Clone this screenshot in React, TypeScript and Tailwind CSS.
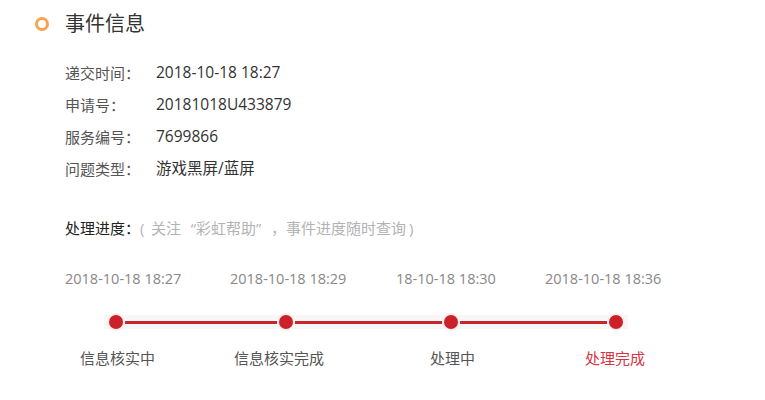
const FONT = "font-['Open_Sans','Noto_Sans_CJK_SC',sans-serif]";

const info = [
  { label: '递交时间：', value: '2018-10-18 18:27' },
  { label: '申请号：', value: '20181018U433879' },
  { label: '服务编号：', value: '7699866' },
  { label: '问题类型：', value: '游戏黑屏/蓝屏' },
];

function Dot() {
  return (
    <span className="flex h-[18px] w-[18px] shrink-0 items-center justify-center rounded-full bg-[#fbeeee]">
      <span className="h-[14px] w-[14px] rounded-full bg-[#cc2129]" />
    </span>
  );
}

function Line({ w }: { w: string }) {
  return <span className={`h-[3px] ${w} bg-[#c8262d]`} />;
}

export default function App() {
  return (
    <div className={`h-[400px] w-[765px] bg-white ${FONT}`}>
      {/* Header */}
      <div className="flex items-center pl-[35px] pt-[11px]">
        <span className="h-[14px] w-[14px] rounded-full border-[3px] border-[#f6a452]" />
        <h1 className="ml-[16px] text-[20px] leading-[26px] text-[#333]">事件信息</h1>
      </div>

      {/* Info rows */}
      <div className="mt-[20px] pl-[65px]">
        {info.map((row) => (
          <div key={row.label} className="flex h-[32px] items-center text-[15px]">
            <span className="w-[91px] text-[#555]">{row.label}</span>
            <span className="text-[15.5px] text-[#333]">{row.value}</span>
          </div>
        ))}
      </div>

      {/* Progress */}
      <div className="mt-[32px] flex pl-[65px] text-[15px]">
        <span className="text-[#222]">处理进度：</span>
        <span className="flex text-[#b3b3b3]">
          <span className="w-[11px]">(</span>
          <span>关注</span>
          <span className="inline-block w-[15px] text-right">“</span>
          <span>彩虹帮助</span>
          <span className="inline-block w-[15px]">”</span>
          <span className="inline-block w-[15px]">，</span>
          <span>事件进度随时查询</span>
          <span className="ml-[3px]">)</span>
        </span>
      </div>

      <div className="mt-[28px] grid grid-cols-[165px_166px_149px_auto] pl-[65px] text-[14.5px] text-[#888]">
        <span>2018-10-18 18:27</span>
        <span>2018-10-18 18:29</span>
        <span>18-10-18 18:30</span>
        <span>2018-10-18 18:36</span>
      </div>

      <div className="ml-[104px] mt-[26px] flex h-[14px] w-[524px] items-center bg-[#f8f6f6]">
        <span className="ml-[3px]" />
        <Dot />
        <Line w="w-[152px]" />
        <Dot />
        <Line w="w-[147px]" />
        <Dot />
        <Line w="w-[147px]" />
        <Dot />
      </div>

      <div className="mt-[18px] grid grid-cols-[154px_196px_155px_auto] pl-[80px] text-[15px] text-[#555]">
        <span>信息核实中</span>
        <span>信息核实完成</span>
        <span>处理中</span>
        <span className="text-[#d9333f]">处理完成</span>
      </div>
    </div>
  );
}
